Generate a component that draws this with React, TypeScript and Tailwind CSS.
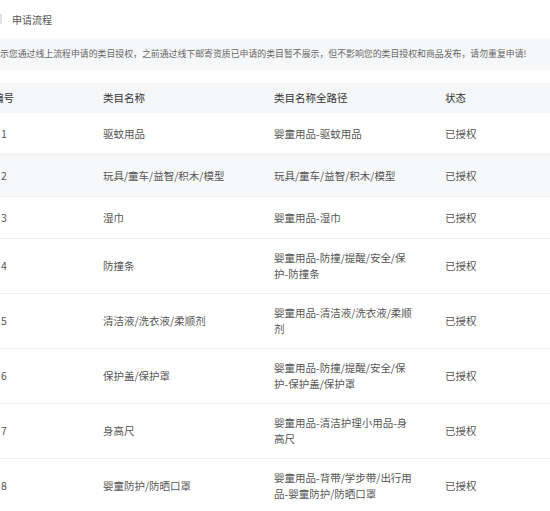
import React from "react";

type Row = { id: number; name: string; path: string; status: string };

const rows: Row[] = [
  { id: 1, name: "驱蚊用品", path: "婴童用品-驱蚊用品", status: "已授权" },
  { id: 2, name: "玩具/童车/益智/积木/模型", path: "玩具/童车/益智/积木/模型", status: "已授权" },
  { id: 3, name: "湿巾", path: "婴童用品-湿巾", status: "已授权" },
  { id: 4, name: "防撞条", path: "婴童用品-防撞/提醒/安全/保护-防撞条", status: "已授权" },
  { id: 5, name: "清洁液/洗衣液/柔顺剂", path: "婴童用品-清洁液/洗衣液/柔顺剂", status: "已授权" },
  { id: 6, name: "保护盖/保护罩", path: "婴童用品-防撞/提醒/安全/保护-保护盖/保护罩", status: "已授权" },
  { id: 7, name: "身高尺", path: "婴童用品-清洁护理小用品-身高尺", status: "已授权" },
  { id: 8, name: "婴童防护/防晒口罩", path: "婴童用品-背带/学步带/出行用品-婴童防护/防晒口罩", status: "已授权" },
];

export default function App() {
  return (
    <div className="w-[550px] h-[511px] overflow-hidden bg-white font-['Noto_Sans_CJK_SC','Noto_Sans',sans-serif]">
      {/* tab title */}
      <div className="h-[38px] flex items-center">
        <span className="w-[2px] h-[10px] bg-[#e3e3e3]" />
        <span className="ml-[10px] text-[10px] text-[#555]">申请流程</span>
      </div>

      {/* notice */}
      <div className="h-[32px] bg-[#f6f7f9] flex items-center overflow-hidden">
        <p className="whitespace-nowrap text-[8.9px] text-[#666]">
          示您通过线上流程申请的类目授权，之前通过线下邮寄资质已申请的类目暂不展示，但不影响您的类目授权和商品发布，请勿重复申请!
        </p>
      </div>

      {/* table */}
      <div className="mt-[13px]">
        <div className="grid grid-cols-[103px_171px_171px_1fr] h-[30px] items-center bg-[#f5f6f8] text-[10.5px] text-[#333]">
          <span className="ml-[-7px]">编号</span>
          <span>类目名称</span>
          <span>类目名称全路径</span>
          <span>状态</span>
        </div>
        {rows.map((r) => (
          <div
            key={r.id}
            className={`grid grid-cols-[103px_171px_171px_1fr] min-h-[42px] py-[11px] items-center border-b border-[#f0f0f0] text-[10.5px] leading-[16px] text-[#555] ${
              r.id === 2 ? "bg-[#f7f8fa]" : "bg-white"
            }`}
          >
            <span className="pl-[1px]">{r.id}</span>
            <span>{r.name}</span>
            <span className="pr-[30px]">{r.path}</span>
            <span>{r.status}</span>
          </div>
        ))}
      </div>
    </div>
  );
}
